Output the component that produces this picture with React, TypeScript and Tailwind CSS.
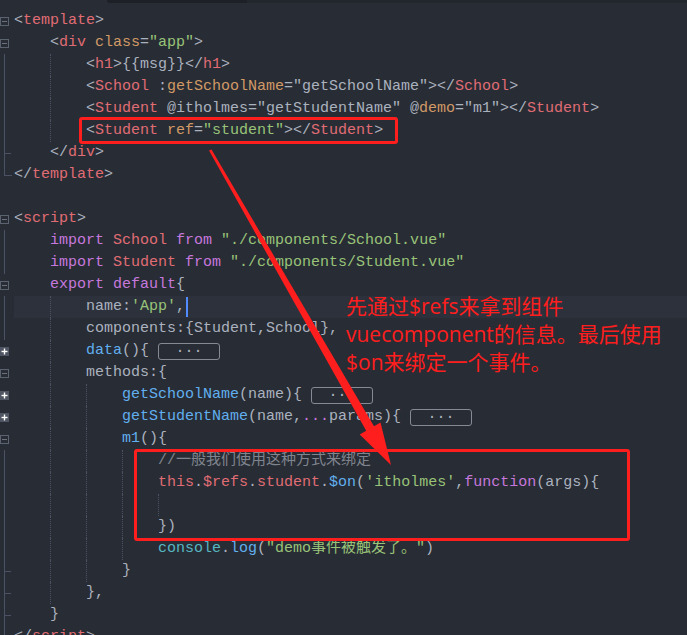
import React from "react";

type Tok = [string, string];
const P = "text-[#abb2bf]";
const R = "text-[#e06c75]";
const O = "text-[#d19a66]";
const G = "text-[#98c379]";
const K = "text-[#c678dd]";
const B = "text-[#61afef]";
const C = "text-[#7f848e]";
const T = "text-[#56b6c2]";

type Fold = "minus" | "plus" | "line" | "tick" | "end" | "none";
interface Line {
  fold: Fold;
  indent: number;
  toks: Tok[];
  box?: boolean;
  cursor?: boolean;
  current?: boolean;
}

const lines: Line[] = [
  { fold: "minus", indent: 0, toks: [["<", P], ["template", R], [">", P]] },
  { fold: "minus", indent: 1, toks: [["<", P], ["div", R], [" ", P], ["class", O], ["=", P], ['"app"', G], [">", P]] },
  { fold: "line", indent: 2, toks: [["<", P], ["h1", R], [">{{msg}}</", P], ["h1", R], [">", P]] },
  { fold: "line", indent: 2, toks: [["<", P], ["School", R], [" :", P], ["getSchoolName", O], ['="getSchoolName"></', P], ["School", R], [">", P]] },
  { fold: "line", indent: 2, toks: [["<", P], ["Student", R], [' @itholmes="getStudentName" @', P], ["demo", O], ['="m1"></', P], ["Student", R], [">", P]] },
  { fold: "line", indent: 2, toks: [["<", P], ["Student", R], [" ", P], ["ref", O], ["=", P], ['"student"', G], ["></", P], ["Student", R], [">", P]] },
  { fold: "tick", indent: 1, toks: [["</", P], ["div", R], [">", P]] },
  { fold: "end", indent: 0, toks: [["</", P], ["template", R], [">", P]] },
  { fold: "none", indent: 0, toks: [] },
  { fold: "minus", indent: 0, toks: [["<", P], ["script", R], [">", P]] },
  { fold: "line", indent: 1, toks: [["import", K], [" ", P], ["School", R], [" ", P], ["from", K], [" ", P], ['"./components/School.vue"', G]] },
  { fold: "line", indent: 1, toks: [["import", K], [" ", P], ["Student", R], [" ", P], ["from", K], [" ", P], ['"./components/Student.vue"', G]] },
  { fold: "minus", indent: 1, toks: [["export default", K], ["{", P]] },
  { fold: "line", indent: 2, toks: [["name:", P], ["'App'", G], [",", P]], cursor: true, current: true },
  { fold: "line", indent: 2, toks: [["components:{Student,School},", P]] },
  { fold: "plus", indent: 2, toks: [["data", B], ["(){ ", P]], box: true },
  { fold: "minus", indent: 2, toks: [["methods:{", P]] },
  { fold: "plus", indent: 3, toks: [["getSchoolName", B], ["(name){ ", P]], box: true },
  { fold: "plus", indent: 3, toks: [["getStudentName", B], ["(name,", P], ["...", K], ["params){ ", P]], box: true },
  { fold: "minus", indent: 3, toks: [["m1", B], ["(){", P]] },
  { fold: "line", indent: 4, toks: [["//一般我们使用这种方式来绑定", C]] },
  { fold: "line", indent: 4, toks: [["this", R], [".", P], ["$refs", R], [".", P], ["student", R], [".", P], ["$on", B], ["(", P], ["'itholmes'", G], [",", P], ["function", K], ["(args){", P]] },
  { fold: "line", indent: 5, toks: [] },
  { fold: "line", indent: 4, toks: [["})", P]] },
  { fold: "line", indent: 4, toks: [["console", T], [".", P], ["log", B], ["(", P], ['"demo事件被触发了。"', G], [")", P]] },
  { fold: "tick", indent: 3, toks: [["}", P]] },
  { fold: "tick", indent: 2, toks: [["},", P]] },
  { fold: "tick", indent: 1, toks: [["}", P]] },
  { fold: "end", indent: 0, toks: [["</", P], ["script", R], [">", P]] },
];

function Gutter({ fold }: { fold: Fold }) {
  const lc = "#4b5263";
  return (
    <svg width="14" height="22" viewBox="0 0 14 22" className="shrink-0">
      {fold === "minus" && (
        <g>
          <rect x="0.5" y="7.5" width="8" height="8" fill="none" stroke="#5c6370" />
          <line x1="2" y1="11.5" x2="7" y2="11.5" stroke="#6b717d" />
        </g>
      )}
      {fold === "plus" && (
        <g>
          <rect x="0" y="7" width="9" height="9" fill="#4f5563" />
          <line x1="4.5" y1="8.5" x2="4.5" y2="14.5" stroke="#ffffff" strokeWidth="1.4" />
          <line x1="1.5" y1="11.5" x2="7.5" y2="11.5" stroke="#ffffff" strokeWidth="1.4" />
        </g>
      )}
      {fold === "line" && <line x1="4.5" y1="0" x2="4.5" y2="22" stroke={lc} />}
      {fold === "tick" && (
        <g>
          <line x1="4.5" y1="0" x2="4.5" y2="22" stroke={lc} />
          <line x1="4.5" y1="11.5" x2="11" y2="11.5" stroke={lc} />
        </g>
      )}
      {fold === "end" && (
        <g>
          <line x1="4.5" y1="0" x2="4.5" y2="12" stroke={lc} />
          <line x1="4.5" y1="11.5" x2="12" y2="11.5" stroke={lc} />
        </g>
      )}
    </svg>
  );
}

function FoldBox() {
  return (
    <span className="inline-flex h-[17px] w-[62px] shrink-0 items-center justify-center rounded-[3px] border border-[#858a94] text-[#abb2bf] leading-none">
      ···
    </span>
  );
}

function CodeLine({ line }: { line: Line }) {
  const units = Array.from({ length: line.indent }, (_, i) => i);
  return (
    <div className="flex h-[22px] items-center">
      <Gutter fold={line.fold} />
      <div className={`flex h-full flex-1 items-center ${line.current ? "bg-[#2c313c]" : ""}`}>
        {units.map((i) => (
          <span
            key={i}
            className={`h-full w-[36px] shrink-0 ${i >= 1 ? "border-l border-dotted border-[#4b5263]" : ""}`}
          />
        ))}
        <span className="whitespace-pre">
          {line.toks.map(([t, c], i) => (
            <span key={i} className={c}>
              {t}
            </span>
          ))}
        </span>
        {line.box && <FoldBox />}
        {line.cursor && <span className="ml-[1px] inline-block h-[20px] w-[2px] bg-[#528bff]" />}
      </div>
    </div>
  );
}

export default function App() {
  // arrow geometry
  const tip = [391, 465];
  const u = [0.498, 0.867];
  const pp = [0.867, -0.498];
  const hb = 42;
  const bc = [tip[0] - hb * u[0], tip[1] - hb * u[1]];
  const pt = (d: number) => `${(bc[0] + d * pp[0]).toFixed(1)},${(bc[1] + d * pp[1]).toFixed(1)}`;
  const poly = `209,150.5 211.5,149.5 ${pt(4.5)} ${pt(12)} ${tip[0]},${tip[1]} ${pt(-12)} ${pt(-4.5)}`;

  return (
    <div className="relative h-[635px] w-[687px] overflow-hidden bg-[#282c34] font-['Liberation_Mono','Noto_Sans_CJK_SC',monospace] text-[15px]">
      <div className="flex h-[3px]">
        <div className="w-[107px]" />
        <div className="w-[140px] rounded-bl-[3px] bg-[#1d2026]" />
        <div className="flex-1 bg-[#22262d]" />
      </div>
      <div className="pt-[7px]">
        {lines.map((l, i) => (
          <CodeLine key={i} line={l} />
        ))}
      </div>

      {/* annotations */}
      <div className="absolute left-[79px] top-[117px] h-[27px] w-[319px] rounded-[3px] border-[3px] border-[#ff1e1e]" />
      <div className="absolute left-[134px] top-[449px] h-[92px] w-[496px] rounded-[3px] border-[3px] border-[#ff1e1e]" />
      <svg className="pointer-events-none absolute left-0 top-0" width="687" height="635" viewBox="0 0 687 635">
        <polygon points={poly} fill="#ff1e1e" />
      </svg>
      <div className="absolute left-[346px] top-[292px] font-['Open_Sans','Noto_Sans_CJK_SC',sans-serif] text-[21px] leading-[28px] text-[#ff1e1e]">
        <div className="whitespace-nowrap">先通过$refs来拿到组件</div>
        <div className="whitespace-nowrap">vuecomponent的信息。最后使用</div>
        <div className="whitespace-nowrap">$on来绑定一个事件。</div>
      </div>
    </div>
  );
}
